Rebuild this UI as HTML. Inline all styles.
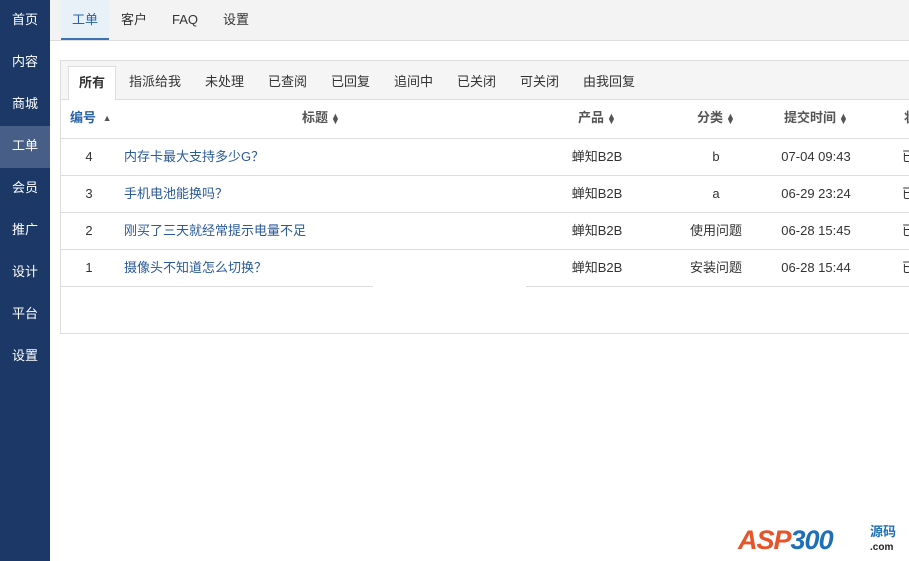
<!DOCTYPE html>
<html><head><meta charset="utf-8"><style>
*{margin:0;padding:0;box-sizing:border-box}
body{width:909px;height:561px;overflow:hidden;background:#fff;font-family:"Liberation Sans","Noto Sans CJK SC",sans-serif;font-size:13px;color:#333;position:relative}
.side{position:absolute;left:0;top:0;width:50px;height:561px;background:#1b3867}
.side div{height:42px;line-height:40px;color:#fff;text-align:center;font-size:13px}
.side .on{background:#475e87}
.top{position:absolute;left:50px;top:0;right:0;height:41px;background:#f3f3f3;border-bottom:1px solid #ddd}
.top span{position:absolute;top:0;height:40px;line-height:40px;text-align:center}
.top .on{background:#e8f0f8;border-bottom:2px solid #3a72b3;color:#2a62a8}
.panel{position:absolute;left:60px;top:60px;width:860px;height:274px;border:1px solid #ddd}
.tabs{height:39px;background:#f5f5f5;border-bottom:1px solid #ddd;position:relative}
.tabs span{position:absolute;top:0;line-height:42px}
.tabs .on{top:5px;left:7px;width:48px;height:34px;background:#fff;border:1px solid #ddd;border-bottom:none;text-align:center;line-height:31px;font-weight:bold}
.row{position:absolute;left:0;width:860px;height:37px;border-bottom:1px solid #ddd}
.row span{position:absolute;top:0;height:36px;line-height:36px;white-space:nowrap}
.c{transform:translateX(-50%)}
.hd span{color:#555;font-weight:bold}
.s{display:inline-block;font-size:9px;line-height:5px;vertical-align:middle;margin-left:3px}
a{color:#2a5a98;text-decoration:none}
</style></head><body>
<div class="side">
<div>首页</div><div>内容</div><div>商城</div><div class="on">工单</div><div>会员</div><div>推广</div><div>设计</div><div>平台</div><div>设置</div>
</div>
<div class="top">
<span class="on" style="left:11px;width:48px">工单</span>
<span style="left:71px">客户</span>
<span style="left:122px">FAQ</span>
<span style="left:173px">设置</span>
</div>
<div class="panel">
<div class="tabs">
<span class="on">所有</span>
<span style="left:68px">指派给我</span>
<span style="left:144px">未处理</span>
<span style="left:207px">已查阅</span>
<span style="left:270px">已回复</span>
<span style="left:333px">追间中</span>
<span style="left:396px">已关闭</span>
<span style="left:459px">可关闭</span>
<span style="left:522px">由我回复</span>
</div>
<div class="row hd" style="top:39px;height:39px">
<span style="left:9px;color:#2a62a8">编号 <span class="s" style="position:static;height:auto;line-height:5px">▲</span></span>
<span class="c" style="left:260px">标题<span class="s" style="position:static;height:auto;line-height:5px">▲<br>▼</span></span>
<span class="c" style="left:536px">产品<span class="s" style="position:static;height:auto;line-height:5px">▲<br>▼</span></span>
<span class="c" style="left:655px">分类<span class="s" style="position:static;height:auto;line-height:5px">▲<br>▼</span></span>
<span class="c" style="left:755px">提交时间<span class="s" style="position:static;height:auto;line-height:5px">▲<br>▼</span></span>
<span style="left:843px">状</span>
</div>
<div class="row" style="top:78px"><span class="c" style="left:28px">4</span><span style="left:63px"><a>内存卡最大支持多少G？</a></span><span class="c" style="left:536px">蝉知B2B</span><span class="c" style="left:655px">b</span><span class="c" style="left:755px">07-04 09:43</span><span style="left:841px">已</span></div>
<div class="row" style="top:115px"><span class="c" style="left:28px">3</span><span style="left:63px"><a>手机电池能换吗？</a></span><span class="c" style="left:536px">蝉知B2B</span><span class="c" style="left:655px">a</span><span class="c" style="left:755px">06-29 23:24</span><span style="left:841px">已</span></div>
<div class="row" style="top:152px"><span class="c" style="left:28px">2</span><span style="left:63px"><a>刚买了三天就经常提示电量不足</a></span><span class="c" style="left:536px">蝉知B2B</span><span class="c" style="left:655px">使用问题</span><span class="c" style="left:755px">06-28 15:45</span><span style="left:841px">已</span></div>
<div class="row" style="top:189px"><span class="c" style="left:28px">1</span><span style="left:63px"><a>摄像头不知道怎么切换？</a></span><span class="c" style="left:536px">蝉知B2B</span><span class="c" style="left:655px">安装问题</span><span class="c" style="left:755px">06-28 15:44</span><span style="left:841px">已</span></div>
<div style="position:absolute;left:312px;top:190px;width:153px;height:53px;background:#fff"></div>
</div>
<div style="position:absolute;left:738px;top:525px;font:italic bold 27px 'Liberation Sans',sans-serif;color:#e8532a;letter-spacing:-1px">ASP<span style="color:#1f6fb8">300</span></div>
<div style="position:absolute;left:870px;top:525px;font-size:13px;color:#1f6fb8;font-weight:bold;line-height:14px">源码<br><span style="font-size:10px;color:#222">.com</span></div>
</body></html>
